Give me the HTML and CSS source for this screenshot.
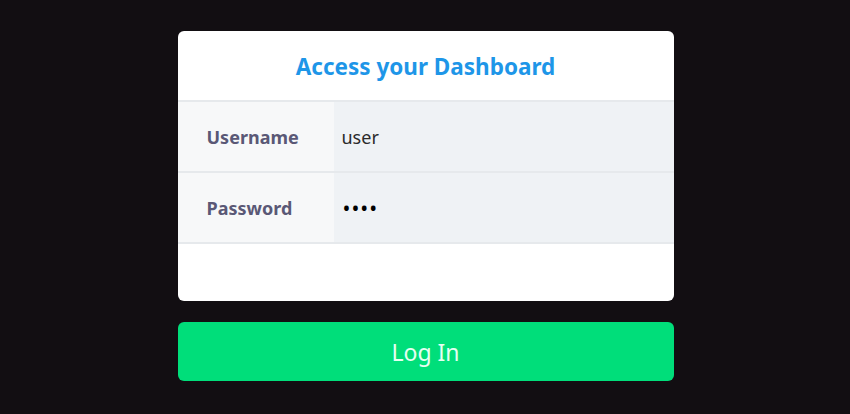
FILE: index.html
```html
<!doctype html>
<html lang="en-us">

<head>
    <title>Access your Dashboard</title>
    <link rel="stylesheet" href="styles.css">
</head>

<body>
    <div id="main-container">
        <div class="card">
            <div class="card-title">Access your Dashboard</div>
            <table class="fields">
                <tr>
                    <td class="label">Username</td>
                    <td class="value">user</td>
                </tr>
                <tr>
                    <td class="label">Password</td>
                    <td class="value dots">&bull;&bull;&bull;&bull;</td>
                </tr>
            </table>
            <div class="card-foot"></div>
        </div>
        <button class="login">Log In</button>
    </div>
</body>

</html>
```

FILE: styles.css
```css
html, body {
    margin: 0;
    padding: 0;
    background-color: #120e12;
    font-family: 'Noto Sans', 'Open Sans', sans-serif;
}

body {
    padding-left: 1px;
}

#main-container {
    width: 496px;
    margin: 0 auto;
    padding-top: 31px;
}

.card {
    background-color: #fff;
    border-radius: 6px;
    overflow: hidden;
}

.card-title {
    height: 69px;
    line-height: 72px;
    text-align: center;
    color: #1e96e8;
    font-weight: bold;
    font-size: 22.5px;
    border-bottom: 2px solid #e6e9ec;
}

.fields {
    width: 100%;
    border-collapse: collapse;
}

.fields td {
    height: 69px;
    border-bottom: 2px solid #e6e9ec;
    padding: 0;
}

.label {
    width: 127px;
    padding-left: 29px !important;
    background-color: #f7f8f9;
    color: #5a5876;
    font-weight: bold;
    font-size: 18px;
}

.value {
    padding-left: 8px !important;
    background-color: #eff2f5;
    color: #2b2b2b;
    font-size: 18px;
}

.dots {
    padding-left: 9px !important;
    font-size: 21px;
    letter-spacing: 1px;
    color: #000;
}

.card-foot {
    height: 57px;
}

.login {
    display: block;
    width: 100%;
    height: 59px;
    margin-top: 21px;
    border: none;
    border-radius: 6px;
    background-color: #00de7a;
    color: #e6fff2;
    font-family: 'Noto Sans', 'Open Sans', sans-serif;
    font-size: 23px;
}
```
